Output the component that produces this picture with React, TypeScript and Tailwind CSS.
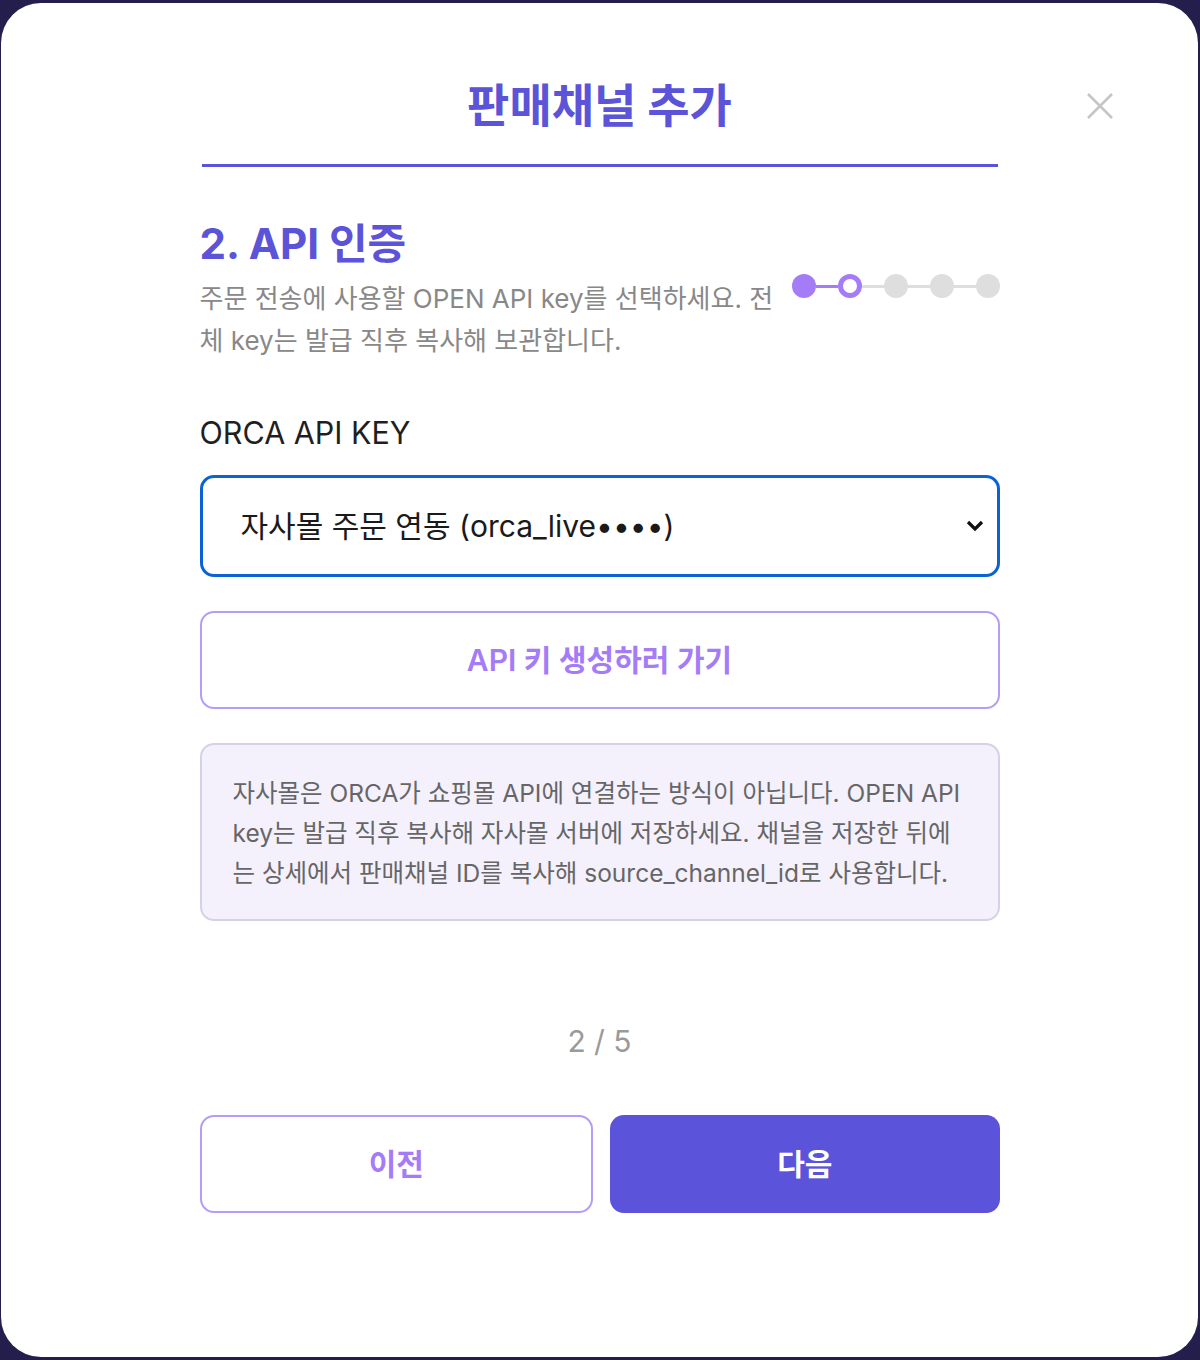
const steps = [0, 1, 2, 3, 4];
const current = 1;

function Stepper() {
  return (
    <div className="flex items-center">
      {steps.map((s) => (
        <div key={s} className="flex items-center">
          {s > 0 && (
            <div
              className={
                s <= current
                  ? "w-[22px] h-[3px] bg-[#a57cf7]"
                  : "w-[22px] h-[3px] bg-[#dedede]"
              }
            />
          )}
          {s < current && <div className="w-6 h-6 rounded-full bg-[#a57cf7]" />}
          {s === current && (
            <div className="w-6 h-6 rounded-full border-[5px] border-[#a57cf7] bg-white" />
          )}
          {s > current && <div className="w-6 h-6 rounded-full bg-[#dedede]" />}
        </div>
      ))}
    </div>
  );
}

export default function App() {
  return (
    <div
      className="h-[1360px] w-[1200px] bg-[#241e4c] pt-[3px] pl-[1px] pr-[2px] pb-[3px]"
      style={{ fontFamily: "Inter, 'Noto Sans CJK KR', 'Noto Sans', sans-serif" }}
    >
      <div className="relative h-full bg-white rounded-[40px] flex flex-col items-center">
        <button className="absolute top-[89px] right-[84px] w-[28px] h-[28px]">
          <svg width="28" height="28" viewBox="0 0 28 28">
            <path d="M2 2 L26 26 M26 2 L2 26" stroke="#c6c6c6" strokeWidth="2.6" fill="none" />
          </svg>
        </button>

        <div className="w-[800px] flex flex-col">
          {/* header */}
          <div className="mx-[2px] pt-[75px] pb-[31px] border-b-[3px] border-[#5b53d9] text-center">
            <h1 className="text-[46px] leading-[55px] font-bold text-[#5b53d8]">
              판매채널 추가
            </h1>
          </div>

          {/* step */}
          <h2 className="mt-[52px] text-[42px] leading-[50px] font-bold text-[#5b53d8]">
            2. API 인증
          </h2>
          <div className="flex items-start gap-3">
            <p className="flex-1 mt-[9px] text-[26px] leading-[42px] text-[#888888]">
              주문 전송에 사용할 OPEN API key를 선택하세요. 전체 key는 발급 직후 복사해 보관합니다.
            </p>
            <div className="mt-[5px]">
              <Stepper />
            </div>
          </div>

          <label className="mt-[53px] text-[30.5px] leading-[36px] text-[#1f1f1f]">
            ORCA API KEY
          </label>

          <div className="mt-[24px] h-[102px] rounded-[14px] border-[3px] border-[#0b62d4] pl-[38px] pr-[14px] flex items-center justify-between">
            <span className="text-[30px] text-[#1a1a1a]">
              자사몰 주문 연동 (orca_live••••)
            </span>
            <svg width="20" height="16" viewBox="0 0 20 16" className="mr-[-2px]">
              <path d="M3 4 L10 11 L17 4" fill="none" stroke="#111" strokeWidth="3.2" />
            </svg>
          </div>

          <button className="mt-[34px] h-[98px] rounded-[14px] border-2 border-[#b59cf6] text-[30px] font-semibold text-[#a57cf7]">
            API 키 생성하러 가기
          </button>

          <div className="mt-[34px] h-[178px] rounded-[14px] border-2 border-[#d6d2e6] bg-[#f4f1fd] px-[31px] pt-[28px]">
            <p className="text-[24.5px] leading-[40px] text-[#666666]">
              자사몰은 ORCA가 쇼핑몰 API에 연결하는 방식이 아닙니다. OPEN API key는 발급 직후 복사해 자사몰 서버에 저장하세요. 채널을 저장한 뒤에는 상세에서 판매채널 ID를 복사해 source_channel_id로 사용합니다.
            </p>
          </div>

          <p className="mt-[102px] text-center text-[30px] leading-[36px] text-[#9a9a9a]">2 / 5</p>

          <div className="mt-[56px] flex gap-[17px]">
            <button className="flex-1 h-[98px] rounded-[14px] border-2 border-[#b59cf6] text-[30px] font-semibold text-[#a57cf7]">
              이전
            </button>
            <button className="flex-1 h-[98px] rounded-[14px] bg-[#5b53d9] text-[30px] font-semibold text-white">
              다음
            </button>
          </div>
        </div>
      </div>
    </div>
  );
}
